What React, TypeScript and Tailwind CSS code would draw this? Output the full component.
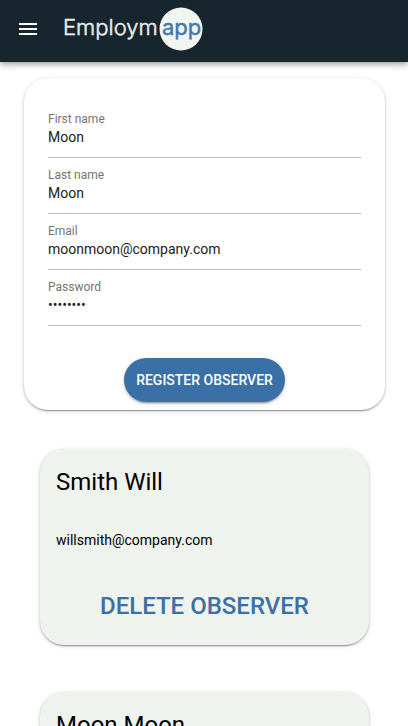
import { useId, useState } from "react";

const observers = [
  { name: "Smith Will", email: "willsmith@company.com" },
  { name: "Moon Moon", email: "moonmoon@company.com" },
];

const cardShadow =
  "shadow-[0_3px_1px_-2px_rgba(0,0,0,0.2),0_1px_2px_0_rgba(0,0,0,0.24),0_1px_5px_0_rgba(0,0,0,0.12)]";

function Logo() {
  return (
    <svg
      width="140"
      height="44"
      viewBox="0 0 140 44"
      role="img"
      aria-label="Employmapp"
      className="block font-[Inter,sans-serif]"
      strokeLinejoin="round"
    >
      <circle cx="117" cy="22" r="21.5" fill="#f0f5f0" />
      <text x="-1" y="28" fontSize="22" fontWeight="300" fill="#e8eeea" stroke="#e8eeea" strokeWidth="0.5">
        Employm
      </text>
      <text x="98" y="28" fontSize="22" fontWeight="400" fill="#3d78b0" stroke="#3d78b0" strokeWidth="0.4">
        app
      </text>
    </svg>
  );
}

function Header() {
  return (
    <header className="flex h-[62px] items-center bg-[#17262e] px-4 pb-1 shadow-[0_2px_4px_-1px_rgba(0,0,0,0.2),0_4px_5px_0_rgba(0,0,0,0.14),0_1px_10px_0_rgba(0,0,0,0.12)]">
      <button type="button" aria-label="Open menu" className="text-white">
        <svg width="24" height="24" viewBox="0 0 24 24" fill="currentColor" className="block">
          <path d="M3 18h18v-2H3v2zm0-5h18v-2H3v2zm0-7v2h18V6H3z" />
        </svg>
      </button>
      <a href="#home" className="ml-6">
        <Logo />
      </a>
    </header>
  );
}

function Field({ label, type = "text", initial }: { label: string; type?: string; initial: string }) {
  const id = useId();
  const [value, setValue] = useState(initial);
  return (
    <div className="flex h-14 flex-col border-b border-[#bdbdbd] pt-2">
      <label htmlFor={id} className="text-xs leading-[18px] text-[#757575]">
        {label}
      </label>
      <input
        id={id}
        type={type}
        value={value}
        onChange={(e) => setValue(e.target.value)}
        className="h-[18px] w-full bg-transparent text-sm text-[#212121] outline-none"
      />
    </div>
  );
}

function RegisterForm() {
  return (
    <form
      onSubmit={(e) => e.preventDefault()}
      className={`rounded-3xl bg-white px-6 pt-6 pb-2 ${cardShadow}`}
    >
      <Field label="First name" initial="Moon" />
      <Field label="Last name" initial="Moon" />
      <Field label="Email" type="email" initial="moonmoon@company.com" />
      <Field label="Password" type="password" initial="moonmoon" />
      <div className="mt-8 flex justify-center">
        <button
          type="submit"
          className="h-11 rounded-full bg-[#3a70a6] px-3 text-sm font-medium text-white uppercase shadow-[0_3px_1px_-2px_rgba(0,0,0,0.2),0_2px_2px_0_rgba(0,0,0,0.14),0_1px_5px_0_rgba(0,0,0,0.12)]"
        >
          Register observer
        </button>
      </div>
    </form>
  );
}

function ObserverCard({ name, email }: { name: string; email: string }) {
  return (
    <article className={`rounded-3xl bg-[#eef3ed] px-4 pt-[17px] pb-[15px] ${cardShadow}`}>
      <h2 className="text-2xl leading-8 text-black">{name}</h2>
      <p className="mt-8 text-sm leading-5 text-black">{email}</p>
      <div className="mt-8 flex justify-center">
        <button type="button" className="h-12 text-2xl font-medium text-[#3a70a6] uppercase">
          Delete observer
        </button>
      </div>
    </article>
  );
}

export default function App() {
  return (
    <div className="h-screen overflow-hidden bg-white font-[Roboto,sans-serif]">
      <Header />
      <main className="pt-4 pr-[23px] pl-6">
        <RegisterForm />
        <section className="mt-[39px] flex flex-col gap-[47px] px-4" aria-label="Observers">
          {observers.map((o) => (
            <ObserverCard key={o.name} name={o.name} email={o.email} />
          ))}
        </section>
      </main>
    </div>
  );
}
